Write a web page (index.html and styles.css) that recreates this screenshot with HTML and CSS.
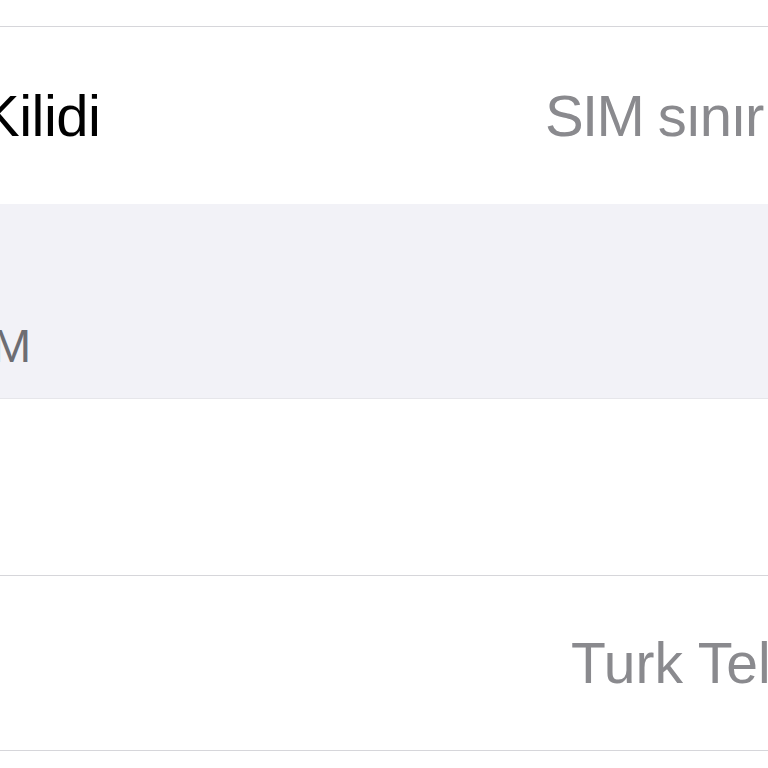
FILE: index.html
```html
<!DOCTYPE html>
<html lang="tr">
<head>
<meta charset="utf-8">
<link rel="stylesheet" href="styles.css">
</head>
<body>
<div class="screen">
  <div class="top-space"></div>
  <div class="group">
    <div class="row row-lock">
      <span class="label label-lock">Kilidi</span>
      <span class="value value-lock">SIM sınır</span>
    </div>
  </div>
  <div class="section-header"><span class="header-text">M</span></div>
  <div class="group group-plain">
    <div class="row row-blank"></div>
    <div class="row row-carrier">
      <span class="label"></span>
      <span class="value value-carrier">Turk Tel</span>
    </div>
  </div>
  <div class="bottom-space"></div>
</div>
</body>
</html>
```
FILE: styles.css
```css
html, body {
  margin: 0;
  padding: 0;
  background: #ffffff;
  overflow: hidden;
}
.screen {
  width: 768px;
  height: 768px;
  overflow: hidden;
  display: flex;
  flex-direction: column;
  font-family: "Liberation Sans", Arial, sans-serif;
  background: #ffffff;
}
.top-space {
  height: 26px;
  flex: none;
  background: #ffffff;
}
.group {
  flex: none;
  background: #ffffff;
  border-top: 1px solid #d6d6da;
}
.group-plain {
  border-top: 1px solid #e6e6ea;
}
.row {
  display: flex;
  align-items: center;
  overflow: hidden;
  white-space: nowrap;
}
.row-lock {
  height: 177px;
}
.row-blank {
  height: 176px;
  border-bottom: 1px solid #d6d6da;
}
.row-carrier {
  height: 174px;
  border-bottom: 1px solid #d6d6da;
}
.label {
  font-size: 58px;
  color: #000000;
}
.label-lock {
  margin-left: -19px;
  letter-spacing: -0.5px;
}
.value {
  margin-left: auto;
  font-size: 58px;
  color: #8a8a8e;
  flex: none;
}
.value-lock {
  width: 223px;
  letter-spacing: -1.6px;
}
.value-carrier {
  width: 197px;
  font-size: 57px;
}
.section-header {
  flex: none;
  height: 194px;
  background: #f2f2f7;
  display: flex;
  align-items: flex-end;
  overflow: hidden;
}
.header-text {
  font-size: 47px;
  color: #6d6d72;
  margin-left: -8px;
  line-height: 1;
  padding-bottom: 29px;
}
.bottom-space {
  flex: 1;
  background: #ffffff;
}
```
